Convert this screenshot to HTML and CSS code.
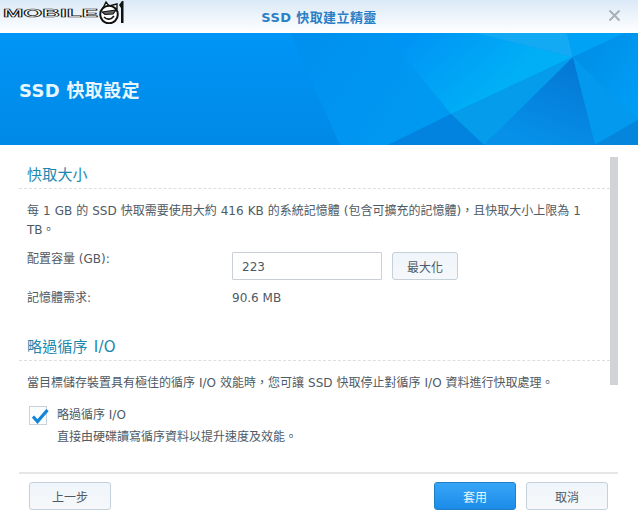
FILE: index.html
```html
<!DOCTYPE html>
<html lang="zh-Hant">
<head>
<meta charset="utf-8">
<title>SSD 快取建立精靈</title>
<link rel="stylesheet" href="styles.css">
</head>
<body>
<div class="wizard">
  <header class="titlebar">
    <svg class="logo" width="126" height="24" viewBox="0 0 126 24" aria-label="MOBILE01">
      <text class="logo-word" x="3" y="17" textLength="95" lengthAdjust="spacingAndGlyphs">MOBILE</text>
      <path d="M103 8l3-6 3 4 4-1 4-1v5z" fill="#fff" stroke="#111" stroke-width="1.4"/>
      <circle cx="109" cy="14.5" r="8.8" fill="#fff" stroke="#111" stroke-width="2"/>
      <path d="M102 12l14-2-3 4-8 .5z" fill="#666" stroke="#111" stroke-width="1.2"/>
      <path d="M104 17c3 3 7 3 10-1" fill="none" stroke="#111" stroke-width="1.6"/>
      <path d="M119 5l3-4h1.5v22H121V8z" fill="#111"/>
    </svg>
    <h1 class="wizard-name">SSD 快取建立精靈</h1>
    <svg class="close" width="13" height="13" viewBox="0 0 13 13" aria-label="關閉">
      <path d="M1.5 1.5l10 10M11.5 1.5l-10 10" stroke="#a9b0b6" stroke-width="2" fill="none"/>
    </svg>
  </header>
  <div class="banner">
    <svg class="banner-art" width="638" height="112" viewBox="0 33 638 112" preserveAspectRatio="none" aria-hidden="true">
      <defs>
        <linearGradient id="base" x1="0" y1="0" x2="0" y2="1"><stop offset="0" stop-color="#0095f6"/><stop offset="1" stop-color="#0089e6"/></linearGradient>
        <linearGradient id="glow" gradientUnits="userSpaceOnUse" x1="410" y1="40" x2="470" y2="110"><stop offset="0" stop-color="#0095f5"/><stop offset="1" stop-color="#00aff6"/></linearGradient>
        <linearGradient id="mid" gradientUnits="userSpaceOnUse" x1="270" y1="60" x2="400" y2="140"><stop offset="0" stop-color="#008fef"/><stop offset="1" stop-color="#0099f1"/></linearGradient>
        <linearGradient id="dark" gradientUnits="userSpaceOnUse" x1="573" y1="60" x2="540" y2="145"><stop offset="0" stop-color="#0477d4"/><stop offset="1" stop-color="#0690e8"/></linearGradient>
        <linearGradient id="right" gradientUnits="userSpaceOnUse" x1="580" y1="60" x2="638" y2="100"><stop offset="0" stop-color="#0090e8"/><stop offset="1" stop-color="#009df5"/></linearGradient>
      </defs>
      <rect x="0" y="33" width="638" height="112" fill="url(#base)"/>
      <polygon points="290,33 475,33 573,57 451,114 388,145 340,145" fill="url(#mid)"/>
      <polygon points="385,33 475,33 573,57 451,114" fill="url(#glow)"/>
      <polygon points="475,33 567,33 573,57" fill="#14a9f3"/>
      <polygon points="567,33 625,33 573,57" fill="#00a2f6"/>
      <polygon points="625,33 638,33 638,120 573,57" fill="url(#right)"/>
      <polygon points="573,57 451,114 484,145" fill="#059deb"/>
      <polygon points="573,57 484,145 595,145" fill="url(#dark)"/>
      <polygon points="573,57 595,145 638,120" fill="#0299ee"/>
      <polygon points="595,145 638,120 638,145" fill="#0585dc"/>
      <polygon points="451,114 388,145 484,145" fill="#0283df"/>
    </svg>
    <h2 class="banner-title">SSD 快取設定</h2>
  </div>
  <main class="content">
    <section class="group">
      <h3 class="group-title">快取大小</h3>
      <p class="text">每 1 GB 的 SSD 快取需要使用大約 416 KB 的系統記憶體 (包含可擴充的記憶體)，且快取大小上限為 1 TB。</p>
      <div class="field field-size">
        <span class="field-label">配置容量 (GB):</span>
        <div class="field-value">
          <input class="input" type="text" value="223">
          <button class="btn btn-max" type="button">最大化</button>
        </div>
      </div>
      <div class="field field-memory">
        <span class="field-label">記憶體需求:</span>
        <span class="memory-value">90.6 MB</span>
      </div>
    </section>
    <section class="group group-second">
      <h3 class="group-title">略過循序 I/O</h3>
      <p class="text">當目標儲存裝置具有極佳的循序 I/O 效能時，您可讓 SSD 快取停止對循序 I/O 資料進行快取處理。</p>
      <div class="option">
        <span class="checkbox">
          <svg width="18" height="16" viewBox="0 0 18 16" aria-hidden="true"><path d="M2 8.5l4.5 5L16.5 2" fill="none" stroke="#1585d8" stroke-width="3.2"/></svg>
        </span>
        <div class="option-text">
          <div>略過循序 I/O</div>
          <div class="option-desc">直接由硬碟讀寫循序資料以提升速度及效能。</div>
        </div>
      </div>
    </section>
    <div class="scrollbar"></div>
  </main>
  <footer class="footer">
    <button class="btn btn-wide" type="button">上一步</button>
    <div class="footer-right">
      <button class="btn btn-wide btn-primary" type="button">套用</button>
      <button class="btn btn-wide" type="button">取消</button>
    </div>
  </footer>
</div>
</body>
</html>
```

FILE: styles.css
```css
* { box-sizing: border-box; }
html, body { margin: 0; height: 100%; background: #fff; overflow: hidden; }
body {
  font-family: "DejaVu Sans", "Noto Sans CJK TC", sans-serif;
  font-size: 13px;
  color: #4e5a64;
}
.wizard { width: 638px; height: 517px; display: flex; flex-direction: column; }
.titlebar {
  position: relative;
  height: 33px;
  flex: none;
  display: flex;
  align-items: center;
  justify-content: center;
  background: linear-gradient(#dbe9f7, #ffffff);
}
.logo { position: absolute; left: 0; top: 0; }
.logo-word {
  font-family: "Liberation Sans", sans-serif;
  font-weight: 700;
  font-size: 11px;
  fill: #fff;
  stroke: #111;
  stroke-width: 0.6px;
}
.wizard-name { margin: 0; font-size: 13px; font-weight: 700; letter-spacing: 0.4px; color: #2a7fc6; }
.close { position: absolute; right: 17px; top: 9px; }
.banner {
  position: relative;
  height: 112px;
  flex: none;
  display: flex;
  align-items: center;
  padding: 0 0 0 19px;
}
.banner-art { position: absolute; left: 0; top: 0; }
.banner-title {
  position: relative;
  margin: 0;
  font-size: 18px;
  font-weight: 700;
  letter-spacing: 0.3px;
  color: #e8f6ff;
}
.content { position: relative; flex: 1; padding: 21px 28px 0 19px; }
.group-title {
  margin: 0;
  height: 23px;
  padding-left: 8px;
  font-size: 15px;
  line-height: 19px;
  font-weight: 400;
  word-spacing: 1px;
  letter-spacing: 0.2px;
  color: #1d87ad;
  border-bottom: 1px dashed #dcdfe2;
}
.text { margin: 0; padding: 13px 8px 0; font-size: 12px; line-height: 19px; word-spacing: 0.2px; }
.field { display: flex; padding-left: 8px; font-size: 12px; }
.field-label { width: 205px; flex: none; }
.field-size { margin-top: 12px; }
.field-size .field-label { line-height: 15px; }
.field-value { display: flex; gap: 10px; }
.field-memory { margin-top: 9px; line-height: 18px; }
.input {
  width: 150px;
  height: 28px;
  padding: 1px 9px 0;
  border: 1px solid #c9cfd4;
  border-radius: 1px;
  font: 12px "DejaVu Sans", sans-serif;
  color: #4e5a64;
  background: #fff;
}
.btn {
  height: 28px;
  padding: 0;
  border: 1px solid #c4d0da;
  border-radius: 3px;
  background: linear-gradient(#eff5fb, #f6f8fa);
  font: 12px "DejaVu Sans", "Noto Sans CJK TC", sans-serif;
  color: #4e5a64;
}
.btn-max { width: 66px; }
.btn-wide { width: 82px; }
.btn-primary {
  border-color: #1f7fc4;
  background: linear-gradient(#37a6f8, #1c8be8);
  color: #e6f5ff;
}
.group-second { margin-top: 31px; }
.option { display: flex; gap: 10px; margin: 12px 0 0 10px; }
.checkbox {
  width: 18px;
  height: 19px;
  flex: none;
  margin-top: 1px;
  border: 1px solid #c9d2da;
  background: #fbfcfd;
}
.checkbox svg { display: block; margin: 1px 0 0 1px; overflow: visible; }
.option-text { font-size: 12px; line-height: 22px; margin-top: -1px; }
.scrollbar {
  position: absolute;
  left: 610px;
  top: 12px;
  width: 8px;
  height: 228px;
  background: #d1d3d6;
}
.footer {
  flex: none;
  height: 45px;
  margin: 0 20px 0 19px;
  padding: 8px 10px 0;
  display: flex;
  justify-content: space-between;
  border-top: 2px solid #e4e6e8;
}
.footer-right { display: flex; gap: 10px; }
```
